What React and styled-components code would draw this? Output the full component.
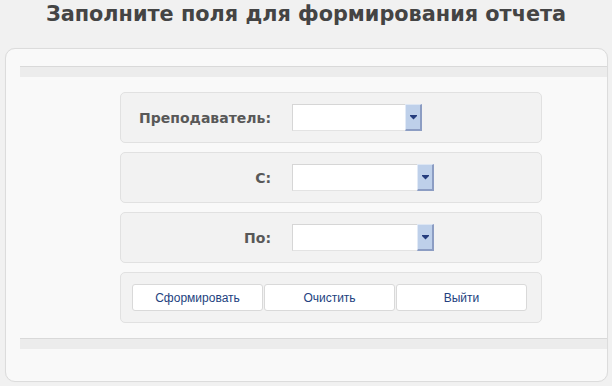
import React from 'react'
import styled, { createGlobalStyle } from 'styled-components'

const GlobalStyle = createGlobalStyle`
    html, body {
        margin: 0;
        padding: 0;
        background: #f1f1f1;
    }
`

const Page = styled.div`
    width: 612px;
    height: 386px;
    overflow: hidden;
`

const Titulo = styled.h1`
    margin: 0;
    height: 48px;
    padding-top: 1px;
    box-sizing: border-box;
    text-align: center;
    font-family: "DejaVu Sans", sans-serif;
    font-weight: bold;
    font-size: 20.8px;
    line-height: 26px;
    color: #444444;
`

const Painel = styled.div`
    margin: 0 4px 0 5px;
    height: 334px;
    box-sizing: border-box;
    padding: 17px 0 0 14px;
    background: #f9f9f9;
    border: 1px solid #dcdcdc;
    border-radius: 10px;
    box-shadow: 0 0 1px rgba(0, 0, 0, 0.05);
`

const Faixa = styled.div`
    height: 10px;
    background: #ececec;
    border-top: 1px solid #d9d9d9;
`

const Formulario = styled.div`
    display: flex;
    flex-direction: column;
    gap: 9px;
    width: 422px;
    margin: 15px 0 15px 100px;
`

const Linha = styled.div`
    display: flex;
    align-items: center;
    height: 51px;
    box-sizing: border-box;
    background: #f2f2f2;
    border: 1px solid #e1e1e1;
    border-radius: 5px;
    padding: ${props => props.botoes ? '0 0 0 11px' : '0'};
    gap: ${props => props.botoes ? '1px' : '21px'};
`

const Rotulo = styled.label`
    width: 150px;
    text-align: right;
    font-family: "DejaVu Sans", sans-serif;
    font-weight: bold;
    font-size: 14px;
    color: #585858;
`

const Selecao = styled.div`
    display: flex;
    justify-content: flex-end;
    width: ${props => props.largura}px;
    height: 27px;
    box-sizing: border-box;
    background: #ffffff;
    border: 1px solid #d6d6d6;
    border-right: none;
    border-bottom-color: #e3e3e3;
`

const Seta = styled.div`
    display: flex;
    align-items: center;
    justify-content: center;
    width: 17px;
    box-sizing: border-box;
    margin-top: -1px;
    height: 27px;
    background: #bed0ea;
    border-left: 1px solid #e2eaf6;
    border-top: 1px solid #dde6f3;
    border-right: 2px solid #8c9dc3;
    border-bottom: 2px solid #8c9dc3;
`

const Botao = styled.button`
    width: 131px;
    height: 27px;
    background: #ffffff;
    border: 1px solid #d9d9d9;
    border-radius: 3px;
    font-family: "Liberation Sans", Arial, sans-serif;
    font-size: 12px;
    color: #233f80;
    cursor: pointer;
`

const IconeSeta = () => (
    <svg width="7" height="5" viewBox="0 0 7 5">
        <rect x="0" y="0" width="7" height="1" fill="#253d7d" />
        <polygon points="0,1 7,1 3.5,4.5" fill="#253d7d" />
    </svg>
)

const Campo = ({ rotulo, largura }) => (
    <Linha>
        <Rotulo>{rotulo}</Rotulo>
        <Selecao largura={largura}>
            <Seta><IconeSeta /></Seta>
        </Selecao>
    </Linha>
)

export default function App() {
    return (
        <Page>
            <GlobalStyle />
            <Titulo>Заполните поля для формирования отчета</Titulo>
            <Painel>
                <Faixa />
                <Formulario>
                    <Campo rotulo="Преподаватель:" largura={130} />
                    <Campo rotulo="С:" largura={142} />
                    <Campo rotulo="По:" largura={142} />
                    <Linha botoes>
                        <Botao>Сформировать</Botao>
                        <Botao>Очистить</Botao>
                        <Botao>Выйти</Botao>
                    </Linha>
                </Formulario>
                <Faixa />
            </Painel>
        </Page>
    )
}
